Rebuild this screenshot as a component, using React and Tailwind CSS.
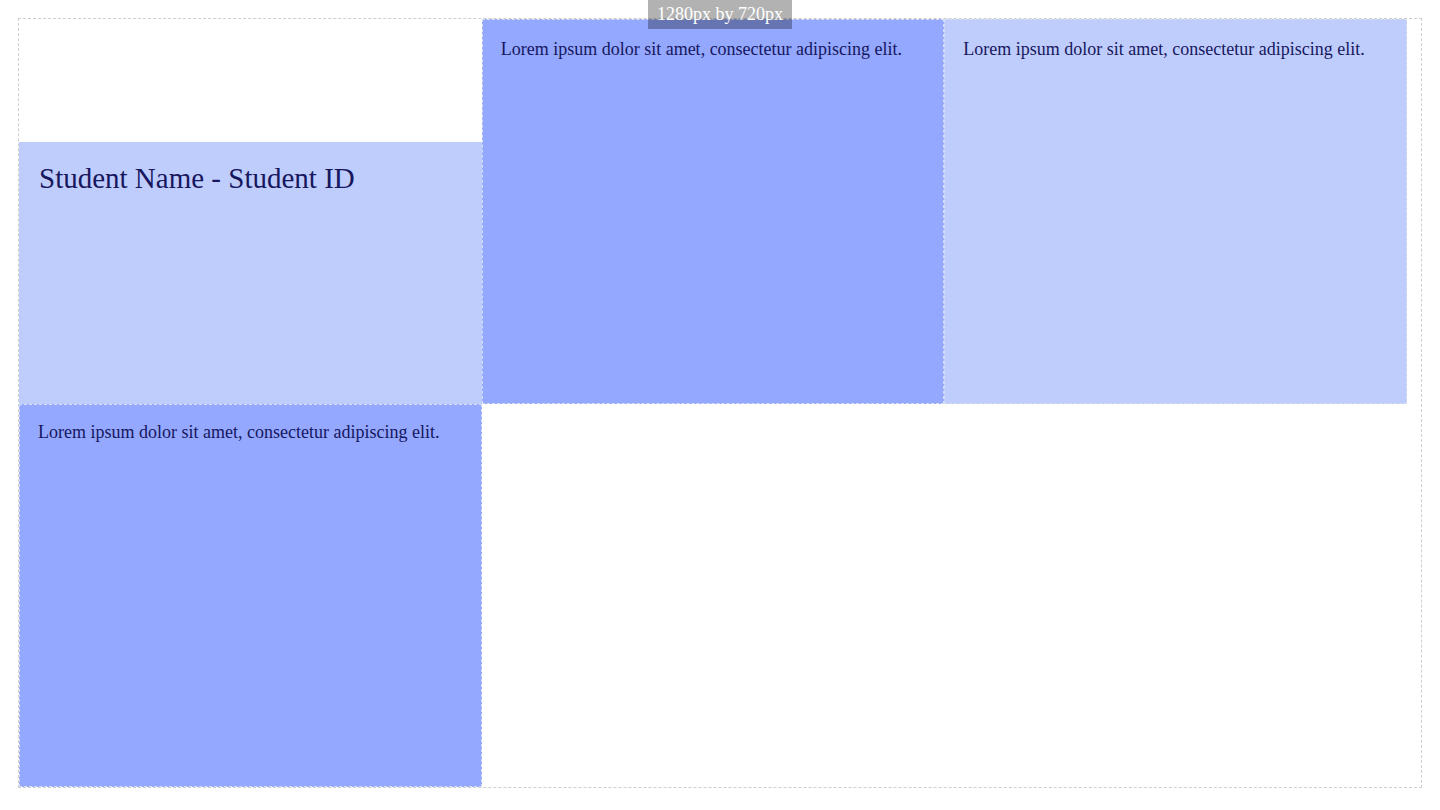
import React from 'react'

const text = 'Lorem ipsum dolor sit amet, consectetur adipiscing elit.'

const Cell = ({ tone, pad, children }) => (
    <div className={`px-[18px] border border-dashed border-[#d6dcf3] ${pad} ${tone === 'dark' ? 'bg-[#93a8fe]' : 'bg-[#bfcdfd]'}`}>
        {children}
    </div>
)

export default function App() {
    return (
        <div className="relative w-[1440px] h-[810px] bg-white font-['Liberation_Serif',serif] text-[#17175e]">
            <div className="absolute left-[648px] top-0 z-10 w-[144px] h-[29px] bg-black/30 text-white text-[18px] flex items-center justify-center">
                1280px by 720px
            </div>
            <div className="ml-[18px] pt-[18px]">
                <div className="w-[1404px] h-[770px] border border-dashed border-[#cfcfcf]">
                    <div className="grid w-[1388px] grid-cols-3 grid-rows-[385px_383px]">
                        <div className="flex flex-col justify-end">
                            <div className="h-[262px] pt-[20px] px-[20px] bg-[#bfcdfd]">
                                <h1 className="text-[29px] leading-[1.15]">Student Name - Student ID</h1>
                            </div>
                        </div>
                        <Cell tone="dark" pad="pt-[19px]"><p className="text-[18px] leading-[1.15]">{text}</p></Cell>
                        <Cell tone="light" pad="pt-[19px]"><p className="text-[18px] leading-[1.15]">{text}</p></Cell>
                        <Cell tone="dark" pad="pt-[17px]"><p className="text-[18px] leading-[1.15]">{text}</p></Cell>
                    </div>
                </div>
            </div>
        </div>
    )
}
